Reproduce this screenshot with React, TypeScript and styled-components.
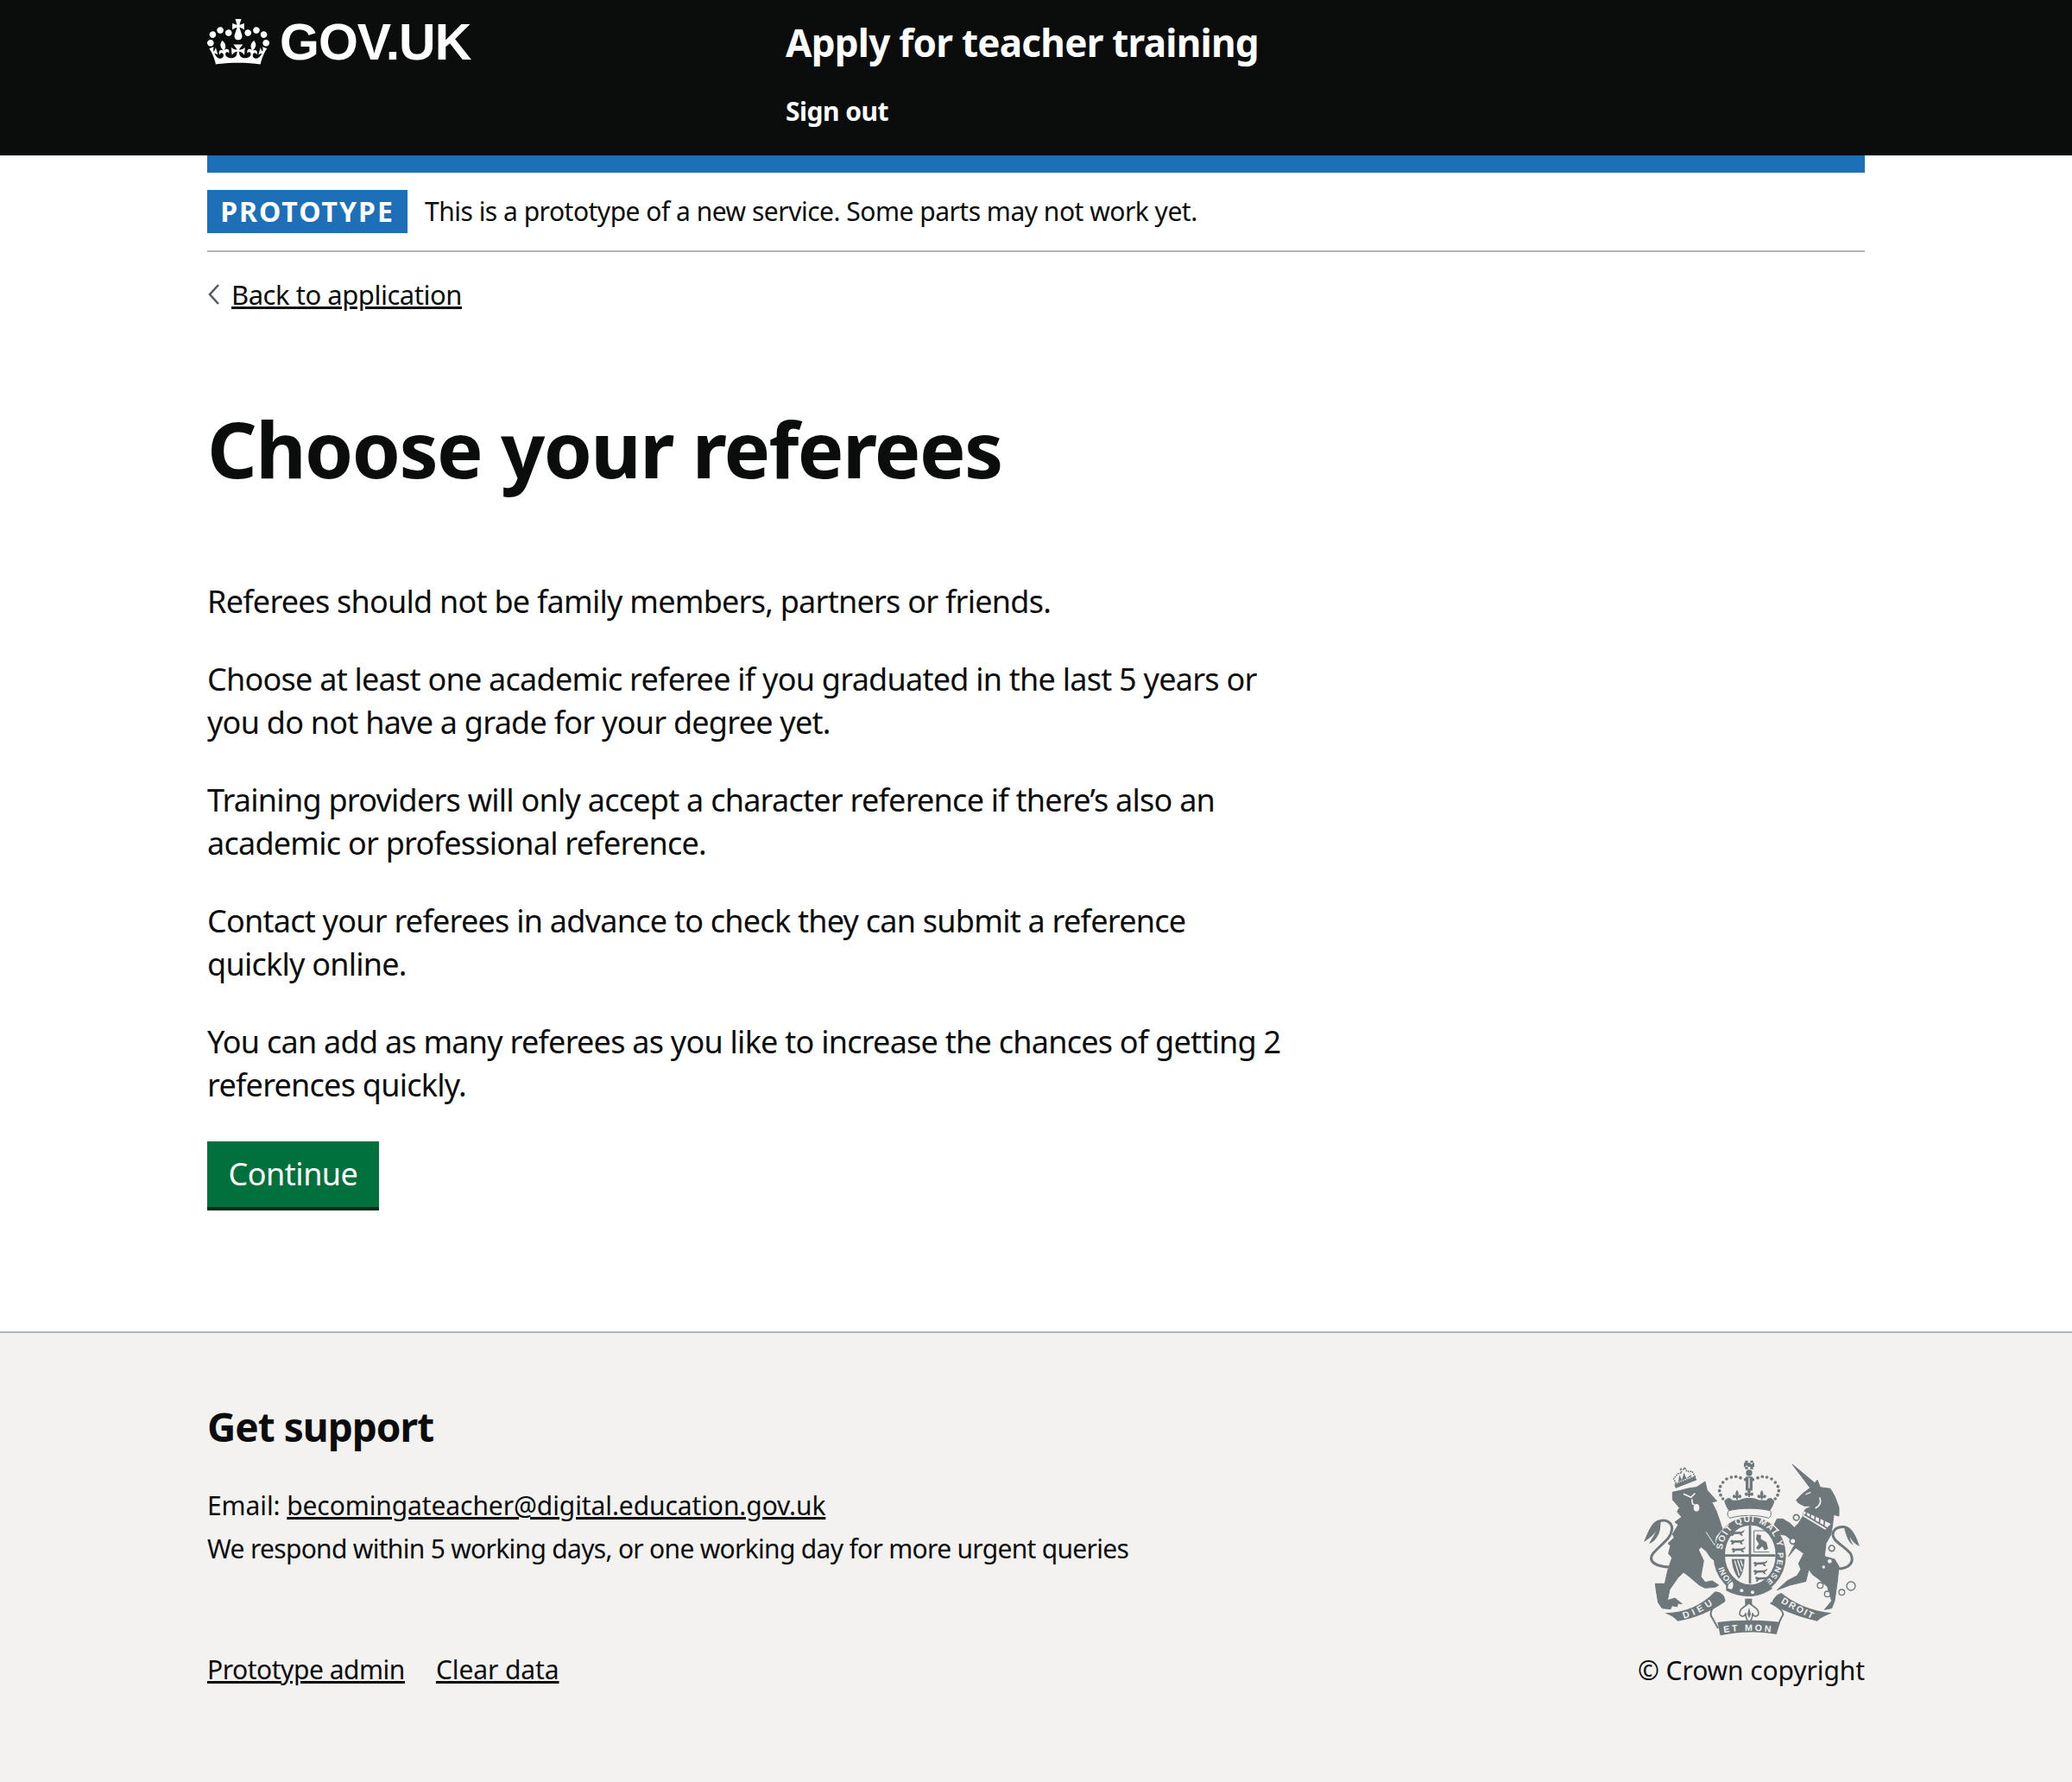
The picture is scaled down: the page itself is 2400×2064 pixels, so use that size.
import React from "react";
import styled, { createGlobalStyle } from "styled-components";

const Global = createGlobalStyle`
  html, body {
    margin: 0;
    padding: 0;
    background: #fff;
    color: #0b0c0c;
    font-family: "Noto Sans", "Open Sans", Arial, sans-serif;
  }
  a { color: #0b0c0c; }
`;

const Page = styled.div`
  width: 2400px;
  min-height: 2064px;
  display: flex;
  flex-direction: column;
`;

const Container = styled.div`
  width: 1920px;
  margin: 0 auto;
`;

const Header = styled.header`
  background: #0b0c0c;
  height: 180px;
  color: #fff;
`;

const HeaderInner = styled(Container)`
  display: flex;
`;

const Logo = styled.a`
  width: 670px;
  height: 98px;
  display: flex;
  align-items: center;
  gap: 12px;
  color: #fff;
  text-decoration: none;
  font-size: 59px;
  font-weight: 700;
  font-family: "Liberation Sans", Arial, sans-serif;
  letter-spacing: -1px;
`;

const Crown = styled.svg`
  width: 72px;
  height: 53px;
  margin-bottom: 2px;
  fill: #fff;
`;

const ServiceColumn = styled.div`
  display: flex;
  flex-direction: column;
`;

const ServiceName = styled.a`
  font-size: 44px;
  font-weight: 700;
  line-height: 98px;
  color: #fff;
  text-decoration: none;
  letter-spacing: -0.75px;
`;

const SignOut = styled.a`
  font-size: 30px;
  font-weight: 700;
  line-height: 62px;
  color: #fff;
  text-decoration: none;
  letter-spacing: -0.5px;
`;

const PhaseBar = styled(Container)`
  border-top: 20px solid #1d70b8;
  border-bottom: 2px solid #b1b4b6;
  height: 70px;
  padding-top: 20px;
  box-sizing: content-box;
  display: flex;
  align-items: flex-start;
  gap: 20px;
`;

const Tag = styled.strong`
  background: #1d70b8;
  color: #fff;
  width: 232px;
  height: 50px;
  font-size: 32px;
  line-height: 50px;
  font-weight: 700;
  letter-spacing: 2px;
  text-align: center;
`;

const PhaseText = styled.span`
  font-size: 30px;
  line-height: 50px;
  letter-spacing: -0.5px;
`;

const Main = styled(Container)`
  flex: 1;
`;

const BackLink = styled.a`
  display: inline-flex;
  align-items: center;
  gap: 12px;
  margin-top: 29px;
  font-size: 31px;
  line-height: 40px;
  letter-spacing: -0.47px;
`;

const Chevron = styled.svg`
  width: 16px;
  height: 26px;
  fill: none;
  stroke: #505a5f;
  stroke-width: 2.5px;
`;

const Title = styled.h1`
  margin: 108px 0 103px;
  font-size: 90px;
  line-height: 100px;
  font-weight: 700;
  letter-spacing: -1.6px;
`;

const Body = styled.p`
  margin: 0 0 40px;
  width: 1250px;
  font-size: 36px;
  line-height: 50px;
  letter-spacing: -0.75px;
`;

const Button = styled.button`
  display: block;
  width: 199px;
  height: 76px;
  padding: 0;
  border: 0;
  background: #00703c;
  box-shadow: 0 4px 0 #002d18;
  color: #fff;
  font-family: inherit;
  font-size: 36px;
  line-height: 76px;
  letter-spacing: -0.5px;
`;

const Footer = styled.footer`
  margin-top: 121px;
  height: 520px;
  background: #f3f2f1;
  border-top: 2px solid #b1b4b6;
`;

const FooterInner = styled(Container)`
  display: flex;
  justify-content: space-between;
`;

const Support = styled.div`
  padding-top: 78px;
`;

const SupportTitle = styled.h2`
  margin: 0 0 37px;
  font-size: 46px;
  line-height: 60px;
  font-weight: 700;
  letter-spacing: -1px;
`;

const FooterText = styled.div<{ $spacing: number }>`
  font-size: 30px;
  line-height: 50px;
  letter-spacing: ${(p) => p.$spacing}px;
`;

const FooterLinks = styled.div`
  display: flex;
  gap: 36px;
  margin-top: 90px;
`;

const Licence = styled.div`
  padding-top: 147px;
  display: flex;
  flex-direction: column;
  align-items: flex-end;
`;

const Arms = styled.svg`
  width: 257px;
  height: 207px;
  margin-right: 3px;
  color: #6e777a;
`;

const Copyright = styled(FooterText)`
  margin-top: 12px;
`;

const CopyrightLink = styled.a`
  text-decoration: none;
`;

const CROWN =
  "M25 30.2c3.5 1.5 7.7-.2 9.1-3.7 1.5-3.6-.2-7.8-3.9-9.2-3.6-1.4-7.6.3-9.1 3.9-1.4 3.5.3 7.5 3.9 9zM9 39.5c3.6 1.5 7.8-.2 9.2-3.7 1.5-3.6-.2-7.8-3.9-9.1-3.6-1.5-7.6.2-9.1 3.8-1.4 3.5.3 7.5 3.8 9zM4.4 57.2c3.5 1.5 7.7-.2 9.1-3.8 1.5-3.6-.2-7.7-3.9-9.1-3.5-1.5-7.6.3-9.1 3.8-1.4 3.5.3 7.6 3.9 9.1zm38.3-21.4c3.5 1.5 7.7-.2 9.1-3.8 1.5-3.6-.2-7.7-3.9-9.1-3.6-1.5-7.6.3-9.1 3.8-1.3 3.6.4 7.7 3.9 9.1zm64.4-5.6c-3.6 1.5-7.8-.2-9.1-3.7-1.5-3.6.2-7.8 3.8-9.2 3.6-1.4 7.7.3 9.2 3.9 1.3 3.5-.4 7.5-3.9 9zm15.9 9.3c-3.6 1.5-7.7-.2-9.1-3.7-1.5-3.6.2-7.8 3.7-9.1 3.6-1.5 7.7.2 9.2 3.8 1.5 3.5-.3 7.5-3.8 9zm4.7 17.7c-3.6 1.5-7.8-.2-9.2-3.8-1.5-3.6.2-7.7 3.9-9.1 3.6-1.5 7.7.3 9.2 3.8 1.3 3.5-.4 7.6-3.9 9.1zM89.3 35.8c-3.6 1.5-7.8-.2-9.2-3.8-1.4-3.6.2-7.7 3.9-9.1 3.6-1.5 7.7.3 9.2 3.8 1.4 3.6-.3 7.7-3.9 9.1zM69.7 17.7l8.9 4.7V9.3l-8.9 2.8c-.2-.3-.5-.6-.9-.9L72.4 0H59.6l3.5 11.2c-.3.3-.6.5-.9.9l-8.8-2.8v13.1l8.8-4.7c.3.3.6.7.9.9l-5 15.4v.1c-.2.8-.4 1.6-.4 2.4 0 4.1 3.1 7.5 7 8.1h.2c.3 0 .7.1 1 .1.4 0 .7 0 1-.1h.2c4-.6 7.1-4.1 7.1-8.1 0-.8-.1-1.7-.4-2.4V34l-5.1-15.4c.4-.2.7-.6 1-.9zM66 92.8c16.9 0 32.8 1.1 47.1 3.2 4-16.9 8.9-26.7 14-33.5l-9.6-3.4c1 4.9 1.1 7.2 0 10.2-1.5-1.4-3-4.3-4.2-8.7L108.6 76c2.8-2 5-3.2 7.5-3.3-4.4 9.4-10 11.9-13.6 11.2-4.3-.8-6.3-4.6-5.6-7.9 1-4.7 5.7-5.9 8-.5 4.3-8.7-3-11.4-7.6-8.8 7.1-7.2 7.9-13.5 2.1-21.1-8 6.1-8.1 12.3-4.5 20.8-4.7-5.4-12.1-2.5-9.5 6.2 3.4-5.2 7.9-2 7.2 3.1-.6 4.3-6.4 7.8-13.5 7.2-10.3-.9-10.9-8-11.2-13.8 2.5-.5 7.1 1.8 11 7.3L80.2 60c-4.1 4.4-8 5.3-12.3 5.4 1.4-4.4 8-11.6 8-11.6H55.5s6.4 7.2 7.9 11.6c-4.2-.1-8-1-12.3-5.4l1.4 16.4c3.9-5.5 8.5-7.7 10.9-7.3-.3 5.8-.9 12.8-11.1 13.8-7.2.6-12.9-2.9-13.5-7.2-.7-5 3.8-8.3 7.1-3.1 2.7-8.7-4.6-11.6-9.4-6.2 3.7-8.5 3.6-14.7-4.6-20.8-5.8 7.6-5 13.9 2.2 21.1-4.7-2.6-11.9.1-7.7 8.8 2.3-5.5 7.1-4.2 8.1.5.7 3.3-1.3 7.1-5.7 7.9-3.5.7-9-1.8-13.5-11.2 2.5.1 4.7 1.3 7.5 3.3l-4.7-15.4c-1.2 4.4-2.7 7.2-4.3 8.7-1.1-3-.9-5.3 0-10.2l-9.5 3.4c5 6.9 9.9 16.7 14 33.5 14.8-2.1 30.8-3.2 47.7-3.2z";

const BG = "#f3f2f1";
const SANS = "'Liberation Sans', Arial, sans-serif";
const DOTS = [
  [425, 128], [408, 122], [392, 118], [376, 120], [360, 126], [347, 138], [338, 152], [335, 167], [339, 182], [347, 195], [358, 204],
  [451, 128], [468, 122], [484, 118], [500, 120], [516, 126], [529, 138], [538, 152], [541, 167], [537, 182], [529, 195], [518, 204],
];

function Fleur({ x, y }: { x: number; y: number }) {
  return (
    <path
      transform={`translate(${x} ${y})`}
      d="M0 -22 C7 -12 6 -6 3 0 C8 -8 16 -6 15 2 C13 8 8 8 6 5 L3 6 L3 11 H-3 L-3 6 L-6 5 C-8 8 -13 8 -15 2 C-16 -6 -8 -8 -3 0 C-6 -6 -7 -12 0 -22 Z"
    />
  );
}

// royal arms, traced by hand in the coordinates of the 3x crop
function RoyalArms() {
  return (
    <Arms viewBox="60 60 771 621" fill="currentColor">
      <defs>
        <path id="garterTop" d="M345 372 A97 108 0 0 1 538 372" />
        <path id="garterRight" d="M537 382 A97 108 0 0 1 478 491" />
        <path id="garterLeft" d="M388 486 A97 108 0 0 1 344 408" />
        <path id="ribbonLeft" d="M212 612 Q265 595 322 556" />
        <path id="ribbonMid" d="M350 660 Q435 648 528 660" />
        <path id="ribbonRight" d="M548 556 Q600 586 668 618" />
        <path id="leopard" d="M0 7 L6 1 L11 4 L40 3 L50 -3 L47 5 L40 9 L45 17 L38 17 L33 11 L14 12 L10 18 L3 18 L6 11 Z" />
      </defs>

      {/* lion tail */}
      <path d="M165 432 C112 432 85 412 104 385 C135 350 168 332 170 300 C171 278 150 266 128 272" fill="none" stroke="currentColor" strokeWidth="9" />
      <path d="M132 268 C105 268 92 296 72 345 C92 332 104 322 116 306 C108 322 100 332 90 352 C112 342 122 325 128 305 Z" />
      {/* lion */}
      <path
        stroke="currentColor"
        strokeWidth="3"
        strokeLinejoin="round"
        d="M172 172 L200 166 L230 158 L255 155 L285 135 L292 165 L326 203 L308 206 L324 238 L336 272 L345 300 L322 326 L318 352 L342 400 L332 420 L305 400 L290 378 L272 362 L262 372 L280 410 L270 465 L285 485 L310 480 L332 495 L320 502 L285 505 L265 495 L230 465 L210 450 L190 470 L162 510 L154 548 L180 540 L205 560 L190 558 L188 570 L170 566 L165 578 L135 575 L122 555 L116 520 L112 490 L145 490 L155 445 L170 400 L158 385 L165 358 L156 350 L178 330 L172 318 L192 285 L180 276 L204 258 L188 240 L196 226 L172 198 Z"
      />
      <path d="M288 310 L344 395" stroke={BG} strokeWidth="3" fill="none" />
      <path d="M210 178 L236 190 L250 176 M240 196 C238 210 242 216 248 214" stroke={BG} strokeWidth="5" fill="none" />
      <ellipse cx="255" cy="226" rx="10" ry="13" fill={BG} />
      {/* lion crown */}
      <path d="M183 158 L178 146 L250 118 L256 130 Z" />
      <path d="M184 142 L176 125 L190 108 L204 104 L198 90 L212 94 L214 86 L222 100 L240 100 L250 118 Z" fill="none" stroke="currentColor" strokeWidth="5" strokeDasharray="5 3" />
      <path d="M192 136 L196 112 L204 130 L212 104 L220 124 L236 112 L238 118 Z" />

      {/* unicorn tail */}
      <path d="M740 438 C790 440 805 412 790 385 C765 355 722 340 730 312 C735 295 760 288 778 296" fill="none" stroke="currentColor" strokeWidth="9" />
      <path d="M770 290 C795 292 808 320 822 360 C804 350 796 342 788 326 C790 340 796 348 800 356 C782 346 776 322 770 304 Z" />
      {/* unicorn */}
      <path
        stroke="currentColor"
        strokeWidth="3"
        strokeLinejoin="round"
        d="M588 75 L666 140 L675 130 L685 155 L720 160 L735 185 L750 225 L750 255 L732 250 L728 285 L722 320 L705 350 L700 395 L735 405 L750 430 L745 480 L735 550 L725 575 L700 580 L725 550 L710 500 L675 470 L660 460 L645 440 L635 482 L580 495 L535 512 L570 480 L605 462 L618 440 L610 420 L628 385 L600 365 L575 395 L598 350 L565 322 L530 315 L545 305 L525 285 L535 265 L555 265 L580 280 L595 295 L610 280 L625 255 L628 240 L635 230 L660 220 L630 220 L610 210 L602 200 L620 180 L650 157 Z"
      />
      <path d="M683 190 C690 205 685 218 668 228" fill="none" stroke={BG} strokeWidth="5" />
      <path d="M634 180 L652 172" fill="none" stroke={BG} strokeWidth="4" />
      <path d="M628 238 L722 282 L702 302 L625 256 Z" fill={BG} />
      <path d="M630 250 L708 296 M638 240 L636 252 M652 246 L650 260 M668 254 L666 270 M684 262 L682 280 M700 270 L698 290" stroke="currentColor" strokeWidth="5" fill="none" />
      <circle cx="602" cy="260" r="10" fill={BG} stroke="currentColor" strokeWidth="5" />
      <circle cx="590" cy="342" r="10" fill={BG} stroke="currentColor" strokeWidth="5" />
      <circle cx="725" cy="367" r="10" fill={BG} stroke="currentColor" strokeWidth="5" />
      <circle cx="718" cy="412" r="7" fill={BG} />
      <circle cx="697" cy="432" r="5" fill={BG} />
      <circle cx="685" cy="496" r="10" fill={BG} stroke="currentColor" strokeWidth="4" />
      <circle cx="710" cy="526" r="10" fill={BG} stroke="currentColor" strokeWidth="4" />
      <circle cx="760" cy="520" r="10" fill={BG} stroke="currentColor" strokeWidth="4" />
      <circle cx="792" cy="498" r="15" fill={BG} stroke="currentColor" strokeWidth="4" />

      {/* royal crown */}
      <path d="M424 62 H434 L433 74 L428 74 L424 70 Z M452 62 H442 L443 74 L448 74 L452 70 Z M424 92 H434 L433 80 L428 80 L424 84 Z M452 92 H442 L443 80 L448 80 L452 84 Z M420 70 H456 V84 H420 Z" />
      <circle cx="438" cy="105" r="11" />
      <rect x="426" y="118" width="24" height="48" />
      <rect x="436" y="122" width="4" height="42" fill={BG} />
      {DOTS.map(([x, y]) => (
        <circle key={`${x}-${y}`} cx={x} cy={y} r="5.5" />
      ))}
      <path d="M352 204 C362 188 372 190 380 200 C390 200 398 200 408 198 C420 190 456 190 468 198 C478 200 488 200 498 200 C506 190 516 188 526 204 C522 218 516 228 510 238 C470 226 408 226 368 238 C362 228 356 218 352 204 Z" />
      <Fleur x={396} y={186} />
      <Fleur x={438} y={178} />
      <Fleur x={482} y={186} />
      <path d="M368 236 C405 226 472 226 510 236 C518 244 514 256 506 262 C470 250 408 250 372 262 C362 256 360 244 368 236 Z" fill={BG} stroke="currentColor" strokeWidth="3" />

      {/* garter and shield */}
      <ellipse cx="440" cy="393" rx="126" ry="136" />
      <ellipse cx="442" cy="390" rx="88" ry="103" fill={BG} />
      <text fontSize="31" fontFamily={SANS} fill={BG} fontWeight="700">
        <textPath href="#garterTop" textLength="290" lengthAdjust="spacing">SOIT QUI MAL Y</textPath>
      </text>
      <text fontSize="28" fontFamily={SANS} fill={BG} fontWeight="700">
        <textPath href="#garterRight" textLength="112" lengthAdjust="spacing">PENSE</textPath>
      </text>
      <text fontSize="28" fontFamily={SANS} fill={BG} fontWeight="700">
        <textPath href="#garterLeft">HONI</textPath>
      </text>
      <path d="M437 288 H445 V490 H437 Z M354 388 H530 V396 H354 Z" />
      {/* quarters: leopards, lion, harp, leopards */}
      {[[372, 306], [372, 336], [376, 364], [452, 412], [452, 440], [458, 464]].map(([x, y]) => (
        <use key={`${x}-${y}`} href="#leopard" x={x} y={y} />
      ))}
      <path d="M455 306 H518 M455 380 H508 M455 306 V380" stroke="currentColor" strokeWidth="3" fill="none" />
      <path d="M465 318 L480 322 L478 334 L498 346 L504 368 L492 374 L484 360 L470 372 L462 366 L472 352 L462 336 Z" />
      <path d="M378 404 C395 404 420 404 422 404 C422 430 415 460 402 472 C388 455 378 430 378 404 Z" />
      <path d="M388 410 L404 462 M398 408 L412 448 M408 408 L416 430" stroke={BG} strokeWidth="4" fill="none" />
      {/* buckle */}
      <path d="M358 496 L378 476 C420 508 462 508 504 494 L520 506 C470 542 410 542 358 514 Z" />
      <path d="M366 492 L380 482 C384 490 384 500 378 510 L364 506 Z" fill={BG} />
      <circle cx="412" cy="514" r="6" fill={BG} />
      <circle cx="450" cy="520" r="6" fill={BG} />

      {/* motto ribbon */}
      <path d="M338 548 C306 575 296 595 312 612 L330 645" fill={BG} stroke="currentColor" strokeWidth="6" />
      <path d="M512 556 C540 570 566 590 552 605 L532 645" fill={BG} stroke="currentColor" strokeWidth="6" />
      <path d="M145 592 C215 590 275 565 318 518 C340 515 358 535 355 552 C300 590 250 610 190 620 C178 606 162 598 145 592 Z" />
      <path d="M550 522 C590 555 650 585 725 592 C700 602 685 610 675 620 C620 608 570 590 516 562 C520 540 535 526 550 522 Z" />
      <path d="M328 624 C390 615 480 615 546 624 L533 666 C470 655 400 655 338 670 Z" />
      <text fontSize="32" fontFamily={SANS} fill={BG} fontWeight="700">
        <textPath href="#ribbonLeft" textLength="112" lengthAdjust="spacing">DIEU</textPath>
      </text>
      <text fontSize="32" fontFamily={SANS} fill={BG} fontWeight="700">
        <textPath href="#ribbonMid" textLength="164" lengthAdjust="spacing">ET MON</textPath>
      </text>
      <text fontSize="32" fontFamily={SANS} fill={BG} fontWeight="700">
        <textPath href="#ribbonRight" textLength="122" lengthAdjust="spacing">DROIT</textPath>
      </text>
      {/* fleur under the shield */}
      <rect x="424" y="542" width="24" height="28" />
      <path d="M438 556 C452 572 474 574 470 598 C462 608 450 602 450 592 C450 606 446 618 438 622 C430 618 426 606 426 592 C426 602 414 608 406 598 C402 574 424 572 438 556 Z" fill={BG} stroke="currentColor" strokeWidth="5" />
      <path d="M438 572 L444 596 L438 610 L432 596 Z" />
    </Arms>
  );
}

export default function App() {
  return (
    <Page>
      <Global />
      <Header>
        <HeaderInner>
          <Logo href="#">
            <Crown viewBox="0 0 132 97" aria-hidden="true">
              <path fillRule="evenodd" d={CROWN} />
            </Crown>
            GOV.UK
          </Logo>
          <ServiceColumn>
            <ServiceName href="#">Apply for teacher training</ServiceName>
            <SignOut href="#">Sign out</SignOut>
          </ServiceColumn>
        </HeaderInner>
      </Header>
      <PhaseBar>
        <Tag>PROTOTYPE</Tag>
        <PhaseText>This is a prototype of a new service. Some parts may not work yet.</PhaseText>
      </PhaseBar>
      <Main>
        <BackLink href="#">
          <Chevron viewBox="0 0 16 26" aria-hidden="true">
            <path d="M13 2 L3 13 L13 24" />
          </Chevron>
          Back to application
        </BackLink>
        <Title>Choose your referees</Title>
        <Body>Referees should not be family members, partners or friends.</Body>
        <Body>Choose at least one academic referee if you graduated in the last 5 years or you do not have a grade for your degree yet.</Body>
        <Body>Training providers will only accept a character reference if there’s also an academic or professional reference.</Body>
        <Body>Contact your referees in advance to check they can submit a reference quickly online.</Body>
        <Body>You can add as many referees as you like to increase the chances of getting 2 references quickly.</Body>
        <Button>Continue</Button>
      </Main>
      <Footer>
        <FooterInner>
          <Support>
            <SupportTitle>Get support</SupportTitle>
            <FooterText $spacing={-0.1}>
              Email: <a href="#">becomingateacher@digital.education.gov.uk</a>
            </FooterText>
            <FooterText $spacing={-0.7}>We respond within 5 working days, or one working day for more urgent queries</FooterText>
            <FooterLinks>
              <FooterText $spacing={-0.47}>
                <a href="#">Prototype admin</a>
              </FooterText>
              <FooterText $spacing={-0.1}>
                <a href="#">Clear data</a>
              </FooterText>
            </FooterLinks>
          </Support>
          <Licence>
            <RoyalArms />
            <Copyright $spacing={-0.1}>
              <CopyrightLink href="#">© Crown copyright</CopyrightLink>
            </Copyright>
          </Licence>
        </FooterInner>
      </Footer>
    </Page>
  );
}
